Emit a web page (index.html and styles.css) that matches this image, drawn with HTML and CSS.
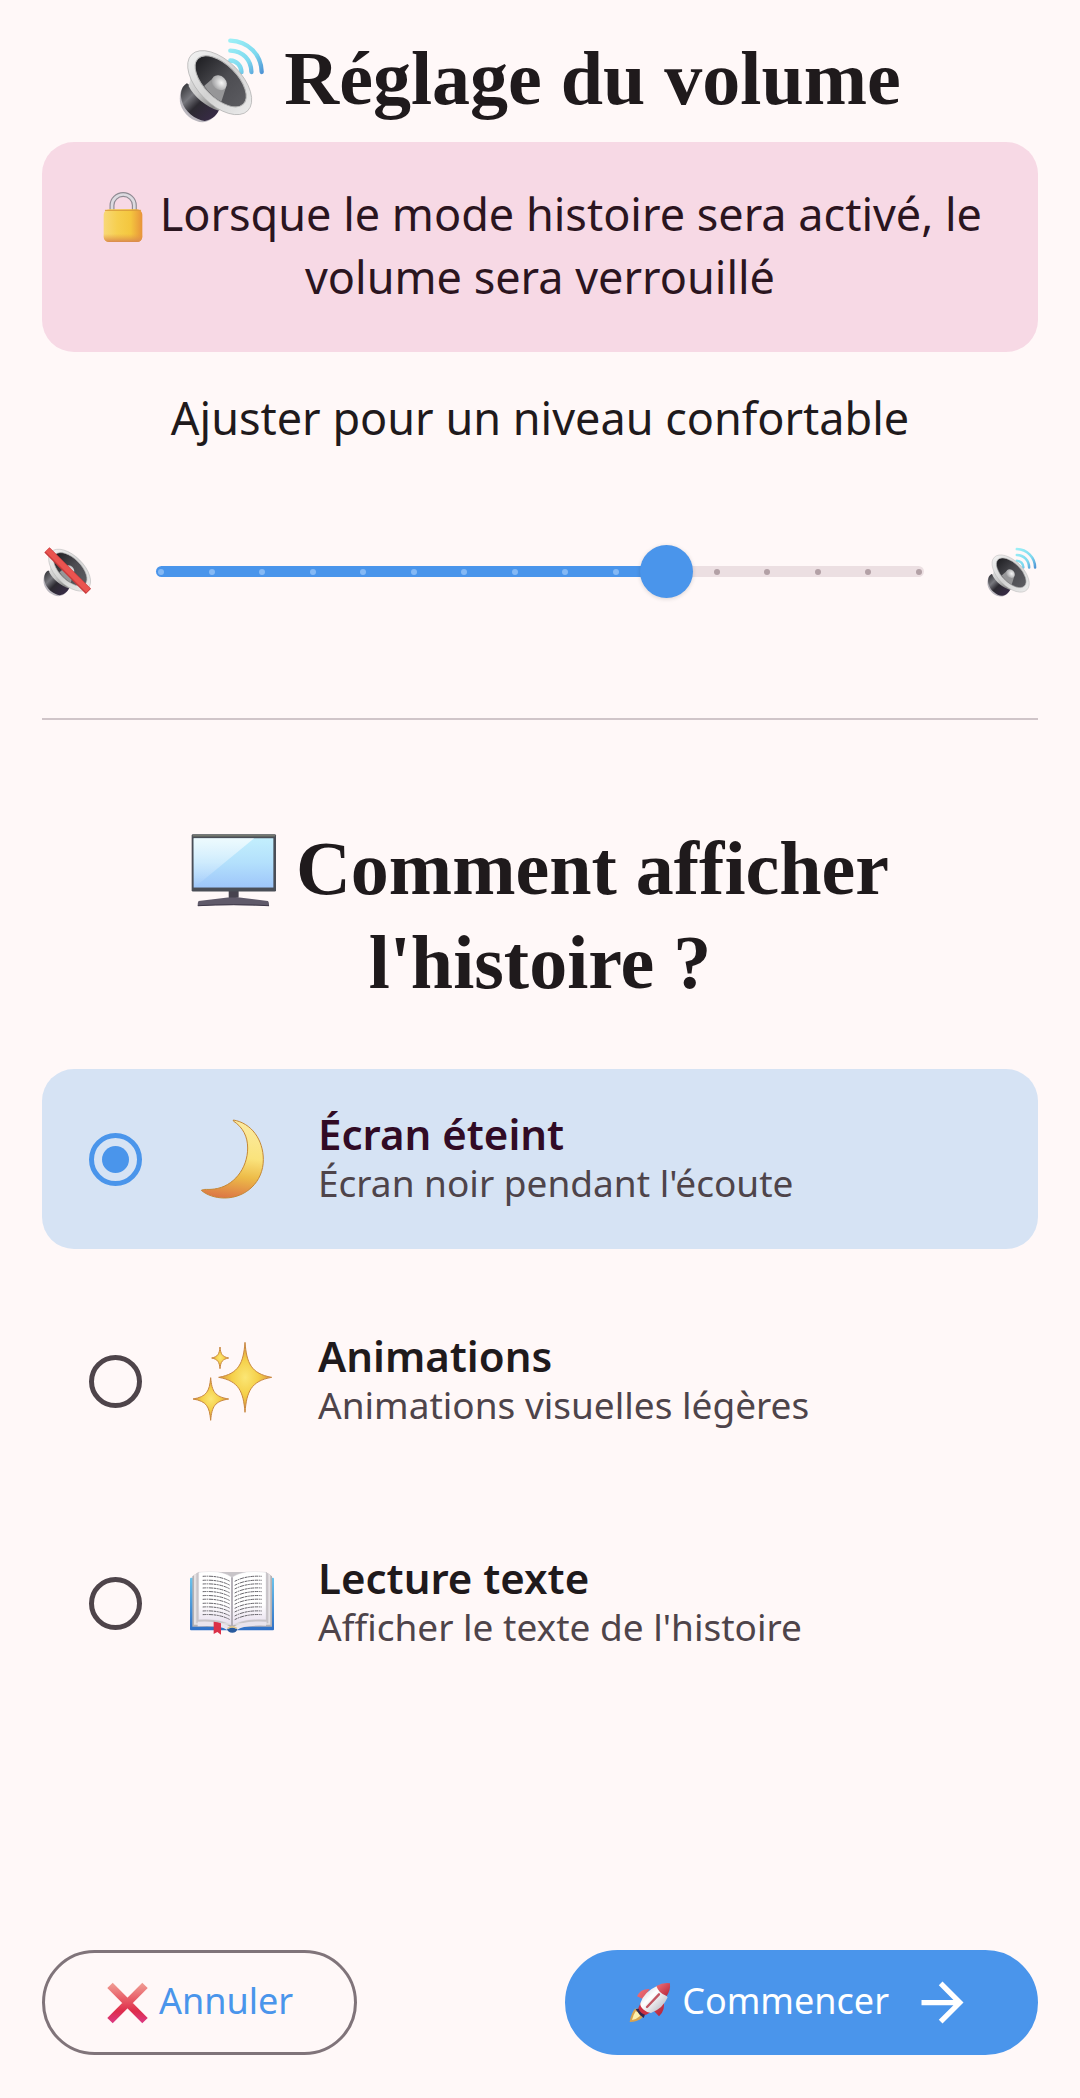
FILE: index.html
```html
<!DOCTYPE html>
<html lang="fr">
<head>
<meta charset="utf-8">
<meta name="viewport" content="width=device-width, initial-scale=1">
<title>Réglage du volume</title>
<link rel="stylesheet" href="styles.css">
</head>
<body>
<main class="page">
  <h1 class="heading"><svg class="heading-icon" viewBox="66 44 260 260" aria-hidden="true">
    <defs>
      <linearGradient id="driver" x1="0" y1="0" x2="1" y2="1"><stop offset="0" stop-color="#2a2a2e"/><stop offset=".3" stop-color="#77777d"/><stop offset=".5" stop-color="#2c2a31"/><stop offset="1" stop-color="#3b2b4c"/></linearGradient>
      <linearGradient id="horn" x1="0" y1="0" x2="1" y2="1"><stop offset="0" stop-color="#e8e8e8"/><stop offset=".4" stop-color="#c9c9c9"/><stop offset=".7" stop-color="#868686"/><stop offset="1" stop-color="#d8d8d8"/></linearGradient>
      <linearGradient id="rim" x1="0" y1="0" x2="1" y2="0"><stop offset="0" stop-color="#f0f0f0"/><stop offset=".5" stop-color="#d2d2d2"/><stop offset="1" stop-color="#e9e9e9"/></linearGradient>
      <linearGradient id="bowl" x1="0" y1="0" x2="1" y2="0"><stop offset="0" stop-color="#202024"/><stop offset=".5" stop-color="#4c4c51"/><stop offset="1" stop-color="#5b5b60"/></linearGradient>
      <radialGradient id="cap" cx=".6" cy=".4" r=".6"><stop offset="0" stop-color="#f6f6f6"/><stop offset="1" stop-color="#a5a5a7"/></radialGradient>
      <linearGradient id="wave" gradientUnits="userSpaceOnUse" x1="220" y1="50" x2="320" y2="155"><stop offset="0" stop-color="#9df0f6"/><stop offset=".6" stop-color="#7ed9ef"/><stop offset="1" stop-color="#4b8fd3"/></linearGradient>
      <g id="speaker">
        <path d="M90 184C68 196 66 228 70 246c8 32 40 56 68 56 26-2 43-22 50-40z" fill="#b9b6bd"/>
        <path d="M90 184c-20 12-20 36-16 52 8 34 42 58 70 62 24-4 38-20 44-36z" fill="url(#driver)"/>
        <path d="M97 130c6 24 6 40-2 62 16 32 54 64 90 74 14-4 24-2 46 10z" fill="url(#horn)"/>
        <ellipse cx="189" cy="182" rx="120" ry="66" transform="rotate(45 189 182)" fill="url(#rim)" stroke="#aaa" stroke-width="2"/>
        <ellipse cx="192" cy="178" rx="97" ry="50" transform="rotate(45 192 178)" fill="url(#bowl)" stroke="#b5b5b5" stroke-width="3"/>
        <path d="M172 166l-30 26c14 20 32 36 52 48l14-44z" fill="#969698"/>
        <ellipse cx="188" cy="182" rx="25" ry="20" transform="rotate(45 188 182)" fill="url(#cap)"/>
      </g>
      <g id="waves" fill="none" stroke="url(#wave)" stroke-width="13" stroke-linecap="round"><path d="M221 55c54 2 94 42 95 95"/><path d="M221 85c38 1 63 28 64 65"/><path d="M221 115c20 1 33 16 34 35"/></g>
    </defs>
    <use href="#waves"/><use href="#speaker"/></svg> Réglage du volume</h1>

  <p class="notice"><svg class="text-icon" viewBox="191 180 150 150" aria-hidden="true">
    <defs><linearGradient id="brass" x1="0" y1="0" x2="1" y2="0"><stop offset="0" stop-color="#f8d878"/><stop offset=".35" stop-color="#f6cf4f"/><stop offset=".7" stop-color="#f4c63e"/><stop offset="1" stop-color="#e8933a"/></linearGradient>
    <linearGradient id="brassfoot" x1="0" y1="0" x2="0" y2="1"><stop offset=".75" stop-color="#e79a45" stop-opacity="0"/><stop offset="1" stop-color="#d98a4e"/></linearGradient></defs>
    <path d="M233 236v-16a33 32 0 0 1 67 0v16" fill="none" stroke="#8f8a92" stroke-width="15"/>
    <path d="M233 236v-16a33 32 0 0 1 67 0v16" fill="none" stroke="#dcdae0" stroke-width="8"/>
    <rect x="208" y="232" width="116" height="98" rx="16" fill="url(#brass)"/><rect x="208" y="232" width="116" height="98" rx="16" fill="url(#brassfoot)"/>
    <path d="M213 235h106" stroke="#d99a3a" stroke-width="3" stroke-linecap="round"/></svg> Lorsque le mode histoire sera activé, le volume sera verrouillé</p>

  <label class="hint" for="volume">Ajuster pour un niveau confortable</label>

  <div class="volume">
    <svg class="volume-icon" viewBox="66 75 231 231" aria-hidden="true"><use href="#speaker"/><path d="M84 88L276 280" stroke="#c93a3c" stroke-width="34"/><path d="M87 88L275 276" stroke="#ea5450" stroke-width="25"/></svg>
    <div class="slider">
      <div class="rail" aria-hidden="true"><i class="on"></i><i class="on"></i><i class="on"></i><i class="on"></i><i class="on"></i><i class="on"></i><i class="on"></i><i class="on"></i><i class="on"></i><i class="on"></i><i></i><i></i><i></i><i></i><i></i><i></i></div>
      <input id="volume" type="range" min="0" max="15" value="10">
    </div>
    <svg class="volume-icon" viewBox="66 44 260 260" aria-hidden="true"><use href="#waves"/><use href="#speaker"/></svg>
  </div>

  <hr class="divider">

  <h2 class="heading" id="display-title"><svg class="heading-icon" viewBox="43 44 260 260" aria-hidden="true">
    <defs><linearGradient id="screen" x1="0" y1="0" x2="0" y2="1"><stop offset="0" stop-color="#c3effd"/><stop offset=".5" stop-color="#b3e0fc"/><stop offset="1" stop-color="#9ec6fa"/></linearGradient>
    <linearGradient id="glare" x1="0" y1="0" x2="0" y2="1"><stop offset="0" stop-color="#fff" stop-opacity=".7"/><stop offset="1" stop-color="#fff" stop-opacity="0"/></linearGradient></defs>
    <path d="M157 236h30v22l-30 2z" fill="#47434f"/><path d="M66 268l88-11h36l85 11q4 2 4 15-50-3-107-3t-109 3q0-12 3-15z" fill="#605a6a"/><path d="M64 282q50-3 108-3t107 3" fill="none" stroke="#3d3748" stroke-width="3"/>
    <rect x="45" y="66" width="255" height="173" rx="4" fill="#4a4e57"/><path d="M48 70h249" stroke="#74786f" stroke-width="5"/>
    <rect x="51" y="78" width="241" height="149" fill="url(#screen)"/><path d="M51 78h183L77 207l-26 20z" fill="url(#glare)"/></svg> Comment afficher l'histoire ?</h2>

  <div class="options" role="radiogroup" aria-labelledby="display-title">
    <label class="option">
      <input type="radio" name="display" checked>
      <svg class="option-icon" viewBox="450 172 252 252" aria-hidden="true">
        <defs><linearGradient id="moon" x1=".4" y1="0" x2=".3" y2="1"><stop offset="0" stop-color="#fbeaa0"/><stop offset=".45" stop-color="#fae37c"/><stop offset=".7" stop-color="#edbb48"/><stop offset="1" stop-color="#dc7545"/></linearGradient></defs>
        <path d="M580 181C634 190 670 240 670 300c0 66-52 115-116 115-29 0-54-9-70-23 7-5 20-1 39-4 57-7 100-61 100-123 0-34-14-62-43-81z" fill="url(#moon)" stroke="#c58836" stroke-width="3" stroke-linejoin="round"/></svg>
      <span class="option-text"><span class="option-title">Écran éteint</span><span class="option-detail">Écran noir pendant l'écoute</span></span>
    </label>
    <label class="option">
      <input type="radio" name="display">
      <svg class="option-icon" viewBox="360 58 252 252" aria-hidden="true">
        <defs><radialGradient id="spark"><stop offset="0" stop-color="#fbe675"/><stop offset=".5" stop-color="#f5d049"/><stop offset="1" stop-color="#d9953d"/></radialGradient></defs>
        <g fill="url(#spark)" stroke="#c98740" stroke-width="3" stroke-linejoin="round">
        <path d="M525 68c5 62 18 94 80 105-62 11-75 43-80 105-5-62-18-94-79-105 61-11 74-43 79-105z"/>
        <path d="M422 174c4 42 12 57 54 64-42 7-50 22-54 64-4-42-12-57-53-64 41-7 49-22 53-64z"/>
        <path d="M450 82c2 22 7 29 26 33-19 4-24 11-26 32-2-21-7-28-25-32 18-4 23-11 25-33z"/></g></svg>
      <span class="option-text"><span class="option-title">Animations</span><span class="option-detail">Animations visuelles légères</span></span>
    </label>
    <label class="option">
      <input type="radio" name="display">
      <svg class="option-icon" viewBox="360 64 252 252" aria-hidden="true">
        <defs><linearGradient id="cover" x1="0" y1="0" x2="0" y2="1"><stop offset="0" stop-color="#6cc3ec"/><stop offset="1" stop-color="#2f6fc6"/></linearGradient>
        <linearGradient id="leaf" x1="0" y1="0" x2="0" y2="1"><stop offset=".6" stop-color="#fff"/><stop offset="1" stop-color="#e6dded"/></linearGradient></defs>
        <rect x="360" y="114" width="252" height="158" rx="3" fill="url(#cover)"/>
        <path d="M367 110l18-12h204l17 12v151H367z" fill="#b5b1b4"/><path d="M372 106l15-8h200l14 8v149H372z" fill="#e5e2e4"/><path d="M379 102l8-5h200l8 5v149H379z" fill="#c8c4c8"/>
        <path d="M383 246q72-4 103 18 31-22 104-18l-2 12q-70-2-86 12h-32q-20-14-87-10z" fill="#e9e4ed"/>
        <path d="M386 98q66-10 100 15v145q-34-22-100-18zM588 98q-66-10-102 15v145q36-22 102-18z" fill="url(#leaf)" stroke="#d2cfd4" stroke-width="1"/>
        <path d="M486 113v146" stroke="#aaa5ae" stroke-width="5"/>
        <g fill="none" stroke="#66646a" stroke-width="3" stroke-dasharray="9 2 5 2 12 2">
          <path id="row" d="M398 110q50-3 82 15M494 125q34-18 82-15"/>
          <use href="#row" y="12"/><use href="#row" y="23"/><use href="#row" y="35"/><use href="#row" y="46"/><use href="#row" y="58"/><use href="#row" y="69"/><use href="#row" y="81"/><use href="#row" y="92"/><use href="#row" y="104"/><use href="#row" y="115"/>
        </g>
        <path d="M431 246q12 0 22 5v34l-11-8-11 6z" fill="#db3048"/><path d="M471 268q15-10 31 0-2 11-15 11t-16-11z" fill="#285a9e"/><path d="M473 266q14-9 27 0" fill="none" stroke="#e2c68a" stroke-width="5"/></svg>
      <span class="option-text"><span class="option-title">Lecture texte</span><span class="option-detail">Afficher le texte de l'histoire</span></span>
    </label>
  </div>

  <div class="actions">
    <button class="button button-outline" type="button">
      <svg class="button-icon" viewBox="226 152 126 126" aria-hidden="true">
        <defs><linearGradient id="cross" gradientUnits="userSpaceOnUse" x1="0" y1="154" x2="0" y2="276"><stop offset="0" stop-color="#f0a096"/><stop offset=".45" stop-color="#e75562"/><stop offset=".7" stop-color="#de2d4c"/><stop offset="1" stop-color="#db3a86"/></linearGradient></defs>
        <path d="M238 162L343 268M343 162L238 268" stroke="url(#cross)" stroke-width="23"/></svg>
      <span class="button-label">Annuler</span>
    </button>
    <button class="button button-filled" type="button">
      <svg class="button-icon" viewBox="236 152 126 126" aria-hidden="true">
        <defs><linearGradient id="hull" x1="0" y1="0" x2="1" y2="1"><stop offset="0" stop-color="#c9c9d2"/><stop offset=".4" stop-color="#fff"/><stop offset="1" stop-color="#a8a8b4"/></linearGradient>
        <linearGradient id="fin" x1="0" y1="0" x2="1" y2="1"><stop offset="0" stop-color="#f0737a"/><stop offset="1" stop-color="#b52238"/></linearGradient></defs>
        <path d="M254 232q-12 14-16 40 22 0 37-12l6-14-14-14z" fill="#d9a24d"/><path d="M256 240q-8 12-11 26 14-2 23-11l3-9z" fill="#fdf0ae"/>
        <path d="M256 234l16-4 14 14-6 16-12-10z" fill="#34264f"/>
        <path d="M298 173q-28-1-38 22l18 8zM340 209q6 28-14 46l-15-16z" fill="url(#fin)"/>
        <path d="M264 230l8-18 30 30-16 9q-16-4-22-21z" fill="#cc2f42"/>
        <path d="M270 216q10-34 50-52l32 34q-14 34-50 47-10 0-22-10t-10-19z" fill="url(#hull)"/>
        <path d="M318 164q20-11 41-8 2 21-10 38-24-8-31-30z" fill="url(#fin)"/>
        <path d="M290 227l36-38" stroke="#c25561" stroke-width="7" stroke-linecap="round"/></svg>
      <span class="button-label">Commencer</span>
      <svg class="arrow-icon" viewBox="0 0 24 24" aria-hidden="true"><path fill="currentColor" d="M12 4l-1.410 1.410L16.170 11H4v2h12.170l-5.580 5.590L12 20l8-8z"/></svg>
    </button>
  </div>
</main>
</body>
</html>
```
FILE: styles.css
```css
:root {
  --surface: #fff8f8;
  --ink: #1f1a1c;
  --ink-soft: #4e444a;
  --primary: #4a95eb;
  --outline: #80747a;
}

* {
  box-sizing: border-box;
}

body {
  margin: 0;
  background: var(--surface);
  color: var(--ink);
  font-family: "Noto Sans", "Open Sans", sans-serif;
}

.page {
  display: flex;
  flex-direction: column;
  min-height: 100vh;
  padding: 31px 42px 43px;
}

.heading {
  margin: 0;
  font-family: "Liberation Serif", serif;
  font-size: 76px;
  font-weight: 700;
  line-height: 94px;
  text-align: center;
}

.heading-icon {
  width: 86px;
  height: 86px;
  vertical-align: -19px;
}

.notice {
  margin: 17px 0 0;
  padding: 40px 42px 44px;
  border-radius: 32px;
  background: #f7d9e5;
  color: #2b151f;
  font-size: 45px;
  line-height: 63px;
  text-align: center;
}

.text-icon {
  width: 50px;
  height: 50px;
  vertical-align: -11px;
}

.hint {
  margin-top: 34px;
  font-size: 45px;
  line-height: 63px;
  text-align: center;
}

.volume {
  display: flex;
  align-items: center;
  gap: 42px;
  margin-top: 96px;
  padding: 0 1px;
}

.volume-icon {
  flex: none;
  width: 50px;
  height: 50px;
}

.slider {
  display: grid;
  flex: 1;
  align-items: center;
}

.slider > * {
  grid-area: 1 / 1;
}

.rail {
  display: flex;
  align-items: center;
  justify-content: space-between;
  height: 11px;
  margin: 0 21px;
  padding: 0 2px;
  border-radius: 6px;
  background: linear-gradient(to right, var(--primary) 66%, #ecdfe2 66%);
}

.rail i {
  width: 6px;
  height: 6px;
  border-radius: 50%;
  background: #b3a1a6;
}

.rail .on {
  background: #85b9f5;
}

.slider input {
  width: 100%;
  height: 53px;
  margin: 0;
  appearance: none;
  background: none;
}

.slider input::-webkit-slider-thumb {
  width: 53px;
  height: 53px;
  appearance: none;
  border-radius: 50%;
  background: var(--primary);
  box-shadow: 0 1px 4px rgba(0, 0, 0, .15);
}

.divider {
  width: 100%;
  height: 2px;
  margin: 120px 0 0;
  border: 0;
  background: #d0c5c9;
}

.divider + .heading {
  margin-top: 101px;
  padding: 0 84px;
}

.options {
  display: grid;
  gap: 42px;
  margin: 60px 0 42px;
}

.option {
  display: flex;
  align-items: center;
  gap: 44px;
  min-height: 180px;
  padding: 20px 47px;
  border-radius: 32px;
}

.option:has(input:checked) {
  background: #d6e3f4;
}

.option input {
  display: grid;
  flex: none;
  place-items: center;
  width: 53px;
  height: 53px;
  margin: 0 4px 0 0;
  appearance: none;
  border: 5px solid var(--ink-soft);
  border-radius: 50%;
}

.option input:checked {
  border-color: var(--primary);
}

.option input:checked::before {
  content: "";
  width: 27px;
  height: 27px;
  border-radius: 50%;
  background: var(--primary);
}

.option-icon {
  flex: none;
  width: 84px;
  height: 84px;
}

.option-text {
  display: flex;
  flex-direction: column;
  padding-bottom: 2px;
}

.option-title {
  font-size: 42px;
  font-weight: 600;
  line-height: 50px;
}

.option:has(input:checked) .option-title {
  color: #310b25;
}

.option-detail {
  color: var(--ink-soft);
  font-size: 37px;
  line-height: 48px;
}

.actions {
  display: flex;
  justify-content: space-between;
  margin-top: auto;
}

.button {
  display: flex;
  align-items: center;
  gap: 11px;
  height: 105px;
  padding: 0 61px;
  border: 3px solid var(--primary);
  border-radius: 53px;
  font-family: inherit;
  font-size: 36px;
}

.button-outline {
  border-color: var(--outline);
  background: transparent;
  color: var(--primary);
}

.button-filled {
  background: var(--primary);
  color: #fff;
}

.button-label {
  padding-bottom: 4px;
}

.button-icon {
  width: 42px;
  height: 42px;
}

.arrow-icon {
  width: 63px;
  height: 63px;
  margin-left: 11px;
}
```
